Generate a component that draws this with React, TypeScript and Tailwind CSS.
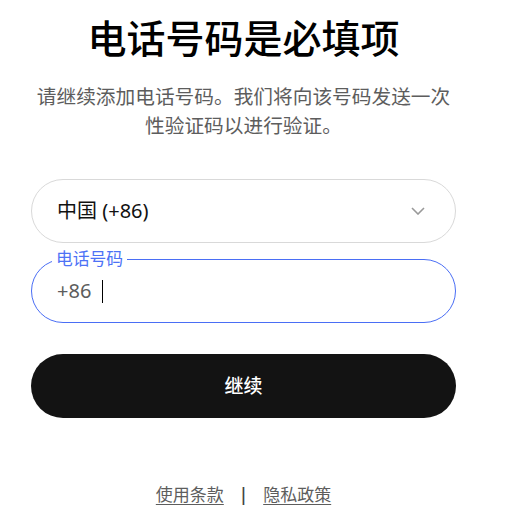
import React from "react";

const font = { fontFamily: '"Noto Sans", "Noto Sans CJK SC", sans-serif' };

export default function App() {
  return (
    <div className="min-h-[528px] w-[516px] bg-white" style={font}>
      <div className="ml-[31px] w-[425px] flex flex-col">
        <h1 className="pt-[12px] text-center text-[39px] leading-[52px] font-medium text-black">
          电话号码是必填项
        </h1>
        <p className="mt-[18px] text-center text-[19.7px] leading-[29px] text-[#5d5d5d]">
          请继续添加电话号码。我们将向该号码发送一次性验证码以进行验证。
        </p>

        {/* country select */}
        <button className="mt-[39px] h-[64px] w-full rounded-full border border-[#d9d9d9] flex items-center justify-between pl-[25px] pr-[30px]">
          <span className="text-[20px] text-[#111]">中国 (+86)</span>
          <svg width="14" height="8" viewBox="0 0 14 8" fill="none">
            <path d="M1 1l6 6 6-6" stroke="#999" strokeWidth="1.6" />
          </svg>
        </button>

        {/* phone input */}
        <div className="relative mt-[16px] h-[64px] w-full rounded-full border border-[#4a6ef5] flex items-center pl-[25px]">
          <span className="absolute left-[20px] top-[-12px] bg-white px-[4px] text-[16.8px] leading-[22px] text-[#4d72f6]">
            电话号码
          </span>
          <span className="text-[20px] text-[#5d5d5d]">+86</span>
          <span className="ml-[11px] h-[23px] w-px bg-black" />
        </div>

        <button className="mt-[31px] h-[64px] w-full rounded-full bg-[#131313] text-white text-[19px] font-medium">
          继续
        </button>

        <div className="mt-[64px] flex items-center justify-center gap-[15px] text-[17px] text-[#5d5d5d]">
          <a className="underline underline-offset-[3px]">使用条款</a>
          <span className="text-[#444] font-semibold">|</span>
          <a className="underline underline-offset-[3px]">隐私政策</a>
        </div>
      </div>
    </div>
  );
}
